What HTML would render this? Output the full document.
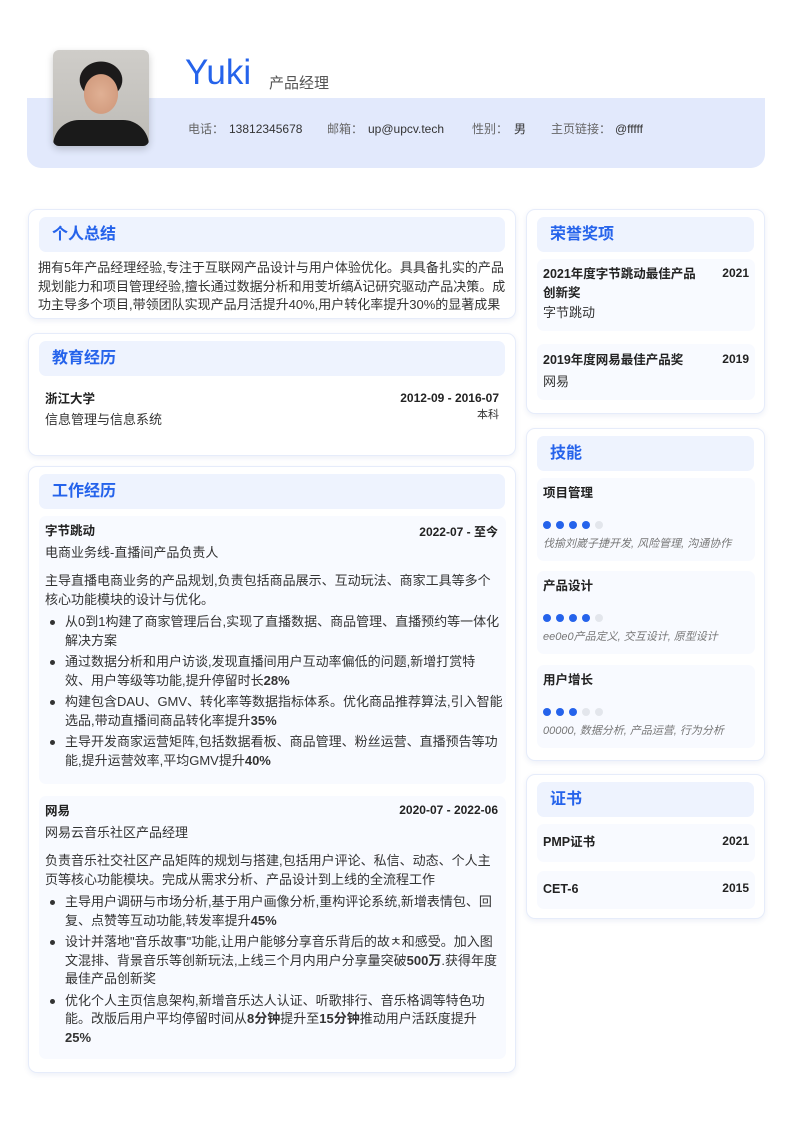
<!DOCTYPE html>
<html><head><meta charset="utf-8"><style>
*{margin:0;padding:0;box-sizing:border-box}
body{width:792px;height:1121px;background:#fff;font-family:"Liberation Sans","Noto Sans CJK SC",sans-serif;color:#333;position:relative;overflow:hidden}
.hdr{position:absolute;left:27px;top:98px;width:738px;height:70px;border-radius:0 0 14px 14px;background:#e2e9fc}
.photo{position:absolute;left:53px;top:50px;width:96px;height:96px;border-radius:6px;background:radial-gradient(ellipse 24px 28px at 48px 44px,#e0b094 0,#d39d80 70%,transparent 72%),radial-gradient(ellipse 30px 26px at 48px 30px,#1c1a1a 0,#1c1a1a 70%,transparent 72%),linear-gradient(#cfcdc9,#bdbbb6);box-shadow:0 3px 8px rgba(0,0,0,.2);overflow:hidden}
.photo:after{content:"";position:absolute;left:0;right:0;bottom:0;height:26px;background:#1a1a1a;border-radius:30px 30px 0 0}
.name{position:absolute;left:185px;top:53px;font-size:35px;color:#2563eb;font-weight:500}
.role{position:absolute;left:269px;top:72px;font-size:15px;color:#555}
.c{position:absolute;top:121px;font-size:12px;line-height:16px;height:16px;color:#333;white-space:nowrap}
.l{color:#666}
.card{position:absolute;background:#fff;border:1px solid #e6ecfa;border-radius:9px;box-shadow:0 2px 6px rgba(30,60,150,.08)}
.tt{position:absolute;left:10px;right:10px;top:7px;height:35px;background:#eef3fe;border-radius:7px;color:#2563eb;font-size:16px;font-weight:bold;line-height:35px;padding-left:13px}
.p{position:absolute;font-size:13px;line-height:18.5px;white-space:nowrap;color:#333}
.b{font-weight:bold;color:#222}
.box{position:absolute;background:#f8faff;border-radius:7px}
.r{position:absolute;right:10px;font-size:12px;font-weight:bold;color:#222}
ul{list-style:none}
li{position:relative;padding-left:20px}
li:before{content:"";position:absolute;left:5px;top:7px;width:5px;height:5px;border-radius:50%;background:#333}
.dots i{display:inline-block;width:8px;height:8px;border-radius:50%;background:#2563eb;margin-right:5px}
.dots i.e{background:#e3e6ec}
.it{font-style:italic;color:#777;font-size:11px}
</style></head><body>
<div class="hdr"></div>
<div class="photo"></div>
<div class="name">Yuki</div>
<div class="role">产品经理</div>
<div class="c l" style="left:188px">电话：</div><div class="c" style="left:229px">13812345678</div>
<div class="c l" style="left:327px">邮箱：</div><div class="c" style="left:368px">up@upcv.tech</div>
<div class="c l" style="left:472px">性别：</div><div class="c" style="left:514px">男</div>
<div class="c l" style="left:551px">主页链接：</div><div class="c" style="left:615px">@fffff</div>

<div class="card" style="left:28px;top:209px;width:488px;height:110px">
<div class="tt">个人总结</div>
<div class="p" style="left:9px;top:49px">拥有5年产品经理经验,专注于互联网产品设计与用户体验优化。具具备扎实的产品<br>规划能力和项目管理经验,擅长通过数据分析和用芰圻缟Ă记研究驱动产品决策。成<br>功主导多个项目,带领团队实现产品月活提升40%,用户转化率提升30%的显著成果</div>
</div>

<div class="card" style="left:28px;top:333px;width:488px;height:123px">
<div class="tt">教育经历</div>
<div class="p b" style="left:16px;top:56px;font-size:12.5px">浙江大学</div>
<div class="r" style="top:57px;right:16px">2012-09 - 2016-07</div>
<div class="p" style="left:16px;top:77px">信息管理与信息系统</div>
<div class="p" style="right:16px;top:72px;font-size:11px">本科</div>
</div>

<div class="card" style="left:28px;top:466px;width:488px;height:607px">
<div class="tt">工作经历</div>
<div class="box" style="left:10px;top:49px;width:467px;height:268px">
<div class="p b" style="left:6px;top:6px;font-size:12.5px">字节跳动</div>
<div class="r" style="top:7px;right:8px">2022-07 - 至今</div>
<div class="p" style="left:6px;top:28px">电商业务线-直播间产品负责人</div>
<div class="p" style="left:6px;top:56px">主导直播电商业务的产品规划,负责包括商品展示、互动玩法、商家工具等多个<br>核心功能模块的设计与优化。</div>
<ul class="p" style="left:6px;top:97px;line-height:18.5px">
<li>从0到1构建了商家管理后台,实现了直播数据、商品管理、直播预约等一体化<br>解决方案</li>
<li style="margin-top:3px">通过数据分析和用户访谈,发现直播间用户互动率偏低的问题,新增打赏特<br>效、用户等级等功能,提升停留时长<b>28%</b></li>
<li style="margin-top:3px">构建包含DAU、GMV、转化率等数据指标体系。优化商品推荐算法,引入智能<br>选品,带动直播间商品转化率提升<b>35%</b></li>
<li style="margin-top:3px">主导开发商家运营矩阵,包括数据看板、商品管理、粉丝运营、直播预告等功<br>能,提升运营效率,平均GMV提升<b>40%</b></li>
</ul>
</div>
<div class="box" style="left:10px;top:329px;width:467px;height:263px">
<div class="p b" style="left:6px;top:6px;font-size:12.5px">网易</div>
<div class="r" style="top:7px;right:8px">2020-07 - 2022-06</div>
<div class="p" style="left:6px;top:28px">网易云音乐社区产品经理</div>
<div class="p" style="left:6px;top:56px">负责音乐社交社区产品矩阵的规划与搭建,包括用户评论、私信、动态、个人主<br>页等核心功能模块。完成从需求分析、产品设计到上线的全流程工作</div>
<ul class="p" style="left:6px;top:97px">
<li>主导用户调研与市场分析,基于用户画像分析,重构评论系统,新增表情包、回<br>复、点赞等互动功能,转发率提升<b>45%</b></li>
<li style="margin-top:3px">设计并落地"音乐故事"功能,让用户能够分享音乐背后的故ㅊ和感受。加入图<br>文混排、背景音乐等创新玩法,上线三个月内用户分享量突破<b>500万</b>.获得年度<br>最佳产品创新奖</li>
<li style="margin-top:3px">优化个人主页信息架构,新增音乐达人认证、听歌排行、音乐格调等特色功<br>能。改版后用户平均停留时间从<b>8分钟</b>提升至<b>15分钟</b>推动用户活跃度提升<br><b>25%</b></li>
</ul>
</div>
</div>

<div class="card" style="left:526px;top:209px;width:239px;height:205px">
<div class="tt">荣誉奖项</div>
<div class="box" style="left:10px;top:49px;width:218px;height:72px">
<div class="p b" style="left:6px;top:6px;font-size:12.5px">2021年度字节跳动最佳产品<br>创新奖</div>
<div class="r" style="top:7px;right:6px">2021</div>
<div class="p" style="left:6px;top:45px">字节跳动</div>
</div>
<div class="box" style="left:10px;top:134px;width:218px;height:56px">
<div class="p b" style="left:6px;top:7px;font-size:12.5px">2019年度网易最佳产品奖</div>
<div class="r" style="top:8px;right:6px">2019</div>
<div class="p" style="left:6px;top:29px">网易</div>
</div>
</div>

<div class="card" style="left:526px;top:428px;width:239px;height:333px">
<div class="tt">技能</div>
<div class="box" style="left:10px;top:49px;width:218px;height:83px">
<div class="p b" style="left:6px;top:6px;font-size:12.5px">项目管理</div>
<div class="dots" style="position:absolute;left:6px;top:38px"><i></i><i></i><i></i><i></i><i class="e"></i></div>
<div class="p it" style="left:6px;top:57px">伐揄刘崴子捷开发, 风险管理, 沟通协作</div>
</div>
<div class="box" style="left:10px;top:142px;width:218px;height:83px">
<div class="p b" style="left:6px;top:6px;font-size:12.5px">产品设计</div>
<div class="dots" style="position:absolute;left:6px;top:38px"><i></i><i></i><i></i><i></i><i class="e"></i></div>
<div class="p it" style="left:6px;top:57px">ee0e0产品定义, 交互设计, 原型设计</div>
</div>
<div class="box" style="left:10px;top:236px;width:218px;height:83px">
<div class="p b" style="left:6px;top:6px;font-size:12.5px">用户增长</div>
<div class="dots" style="position:absolute;left:6px;top:38px"><i></i><i></i><i></i><i class="e"></i><i class="e"></i></div>
<div class="p it" style="left:6px;top:57px">00000, 数据分析, 产品运营, 行为分析</div>
</div>
</div>

<div class="card" style="left:526px;top:774px;width:239px;height:145px">
<div class="tt">证书</div>
<div class="box" style="left:10px;top:49px;width:218px;height:38px">
<div class="p b" style="left:6px;top:9px;font-size:12.5px">PMP证书</div>
<div class="r" style="top:10px;right:6px">2021</div>
</div>
<div class="box" style="left:10px;top:96px;width:218px;height:38px">
<div class="p b" style="left:6px;top:9px;font-size:12.5px">CET-6</div>
<div class="r" style="top:10px;right:6px">2015</div>
</div>
</div>
</body></html>
